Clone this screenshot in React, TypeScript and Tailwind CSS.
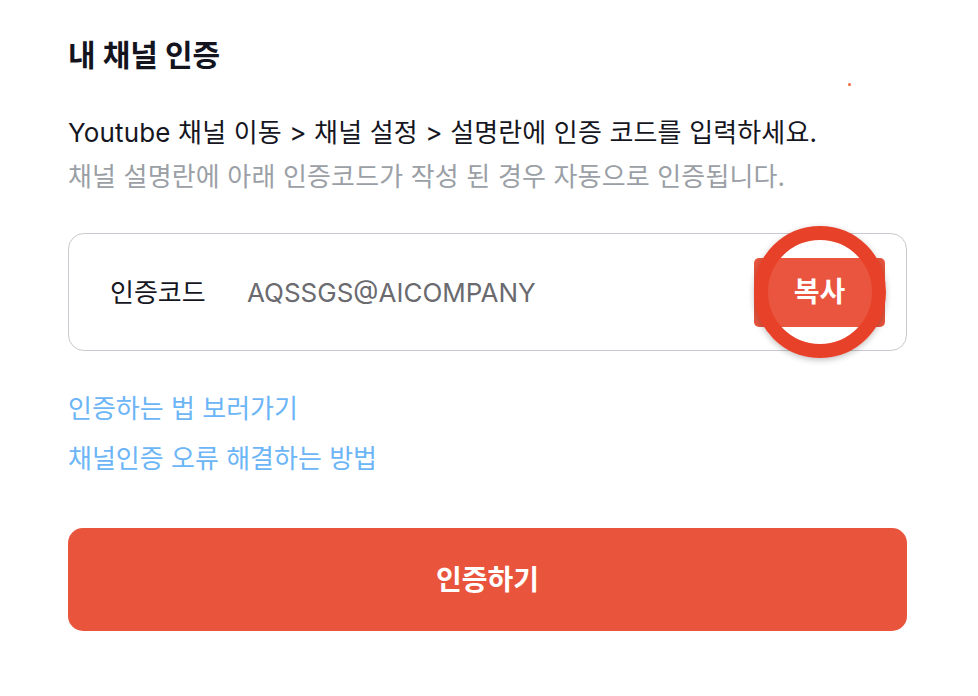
import React from 'react';

const App: React.FC = () => {
  return (
    <div
      className="relative h-[696px] w-[978px] overflow-hidden bg-white pl-[68px] pr-[71px] pt-[35px]"
      style={{ fontFamily: 'Inter, "Noto Sans CJK KR", sans-serif' }}
    >
      {/* stray dot */}
      <span className="absolute left-[848px] top-[83px] h-[3px] w-[3px] rounded-full bg-[#f06a3c]" />

      <h1 className="text-[30px] font-bold leading-[40px] text-[#14141f]">내 채널 인증</h1>

      <div className="mt-[36px]">
        <p className="text-[26px] leading-[44px] tracking-[0.15px] text-[#16161f]">
          Youtube 채널 이동 &gt; 채널 설정 &gt; 설명란에 인증 코드를 입력하세요.
        </p>
        <p className="text-[26px] leading-[44px] tracking-[0.15px] text-[#9b9fa6]">
          채널 설명란에 아래 인증코드가 작성 된 경우 자동으로 인증됩니다.
        </p>
      </div>

      {/* code card */}
      <div className="mt-[34px] flex h-[118px] items-center rounded-[16px] border-[1.5px] border-[#c9cacf] pl-[41px] pr-[21px]">
        <span className="w-[137px] text-[26px] text-[#16161f]">인증코드</span>
        <span className="flex-1 text-[26px] text-[#6a6a6f]">AQSSGS@AICOMPANY</span>
        <div className="relative">
          <button className="flex h-[69px] w-[131px] items-center justify-center rounded-[5px] bg-[#e9553e] text-[28px] font-bold text-white">
            복사
          </button>
          <span className="pointer-events-none absolute left-1/2 top-1/2 h-[132px] w-[132px] -translate-x-1/2 -translate-y-1/2 rounded-full border-[14px] border-[#e8412a] shadow-[0_2px_6px_rgba(0,0,0,0.25)]" />
        </div>
      </div>

      {/* links */}
      <div className="mt-[36px] flex flex-col gap-[6px]">
        <a className="text-[26px] leading-[44px] text-[#6cb5f6]">인증하는 법 보러가기</a>
        <a className="text-[26px] leading-[44px] text-[#6cb5f6]">채널인증 오류 해결하는 방법</a>
      </div>

      <button className="mt-[47px] flex h-[103px] w-full items-center justify-center rounded-[15px] bg-[#e9553c] text-[28px] font-bold text-white">
        인증하기
      </button>
    </div>
  );
};

export default App;
